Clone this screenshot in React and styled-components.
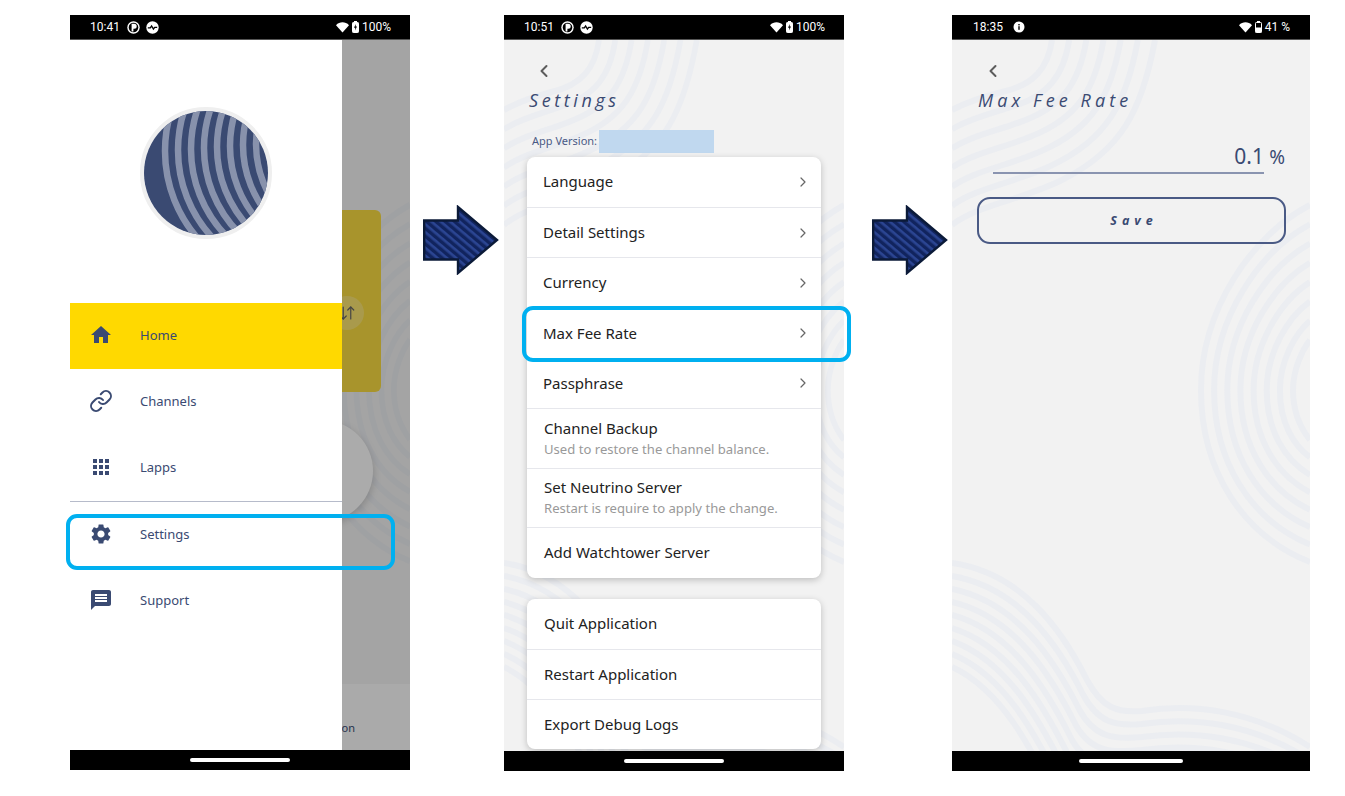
import React from "react";
import styled, { createGlobalStyle } from "styled-components";
import { ChevronLeft, ChevronRight, ArrowDownUp } from "lucide-react";
import { MdHome, MdApps, MdSettings, MdMessage } from "react-icons/md";
import { FiLink } from "react-icons/fi";

const navy = "#3a4a72";

const GlobalStyle = createGlobalStyle`
  html, body {
    margin: 0;
    background: #ffffff;
    font-family: "Noto Sans", "Liberation Sans", sans-serif;
  }
`;

const Page = styled.div`
  display: flex;
  align-items: flex-start;
  width: 1345px;
  height: 796px;
  box-sizing: border-box;
  padding: 15px 0 0 70px;
  overflow: hidden;
`;

const Phone = styled.div`
  position: relative;
  display: flex;
  flex-direction: column;
  flex: none;
  width: ${(p) => p.$width}px;
  height: ${(p) => p.$height}px;
`;

const StatusBar = styled.div`
  display: flex;
  align-items: center;
  flex: none;
  height: 25px;
  box-sizing: border-box;
  padding: 0 ${(p) => p.$right}px 0 ${(p) => p.$left}px;
  background: #000;
  border-bottom: 1px solid #555;
  color: #fff;
  font: 400 12px Roboto, sans-serif;
`;

const StatusTime = styled.span`
  margin-right: ${(p) => p.$gap}px;
`;

const StatusGroup = styled.div`
  display: flex;
  align-items: center;
  gap: ${(p) => p.$gap || 6}px;
`;

const StatusRight = styled(StatusGroup)`
  margin-left: auto;
  gap: 3px;
`;

const Screen = styled.div`
  position: relative;
  flex: 1;
  min-height: 0;
  overflow: hidden;
  background: #f2f2f2;
`;

const Content = styled.div`
  position: relative;
  display: flex;
  flex-direction: column;
  height: 100%;
`;

const NavBar = styled.div`
  display: flex;
  align-items: center;
  justify-content: center;
  flex: none;
  height: 20px;
  background: #000;
`;

const NavPill = styled.div`
  width: ${(p) => p.$width}px;
  height: 4px;
  border-radius: 2px;
  background: #fff;
`;

const WaveSvg = styled.svg`
  position: absolute;
  inset: 0;
  width: 100%;
  height: 100%;
`;

const Highlight = styled.div`
  position: absolute;
  left: ${(p) => p.$left}px;
  top: ${(p) => p.$top}px;
  width: 329px;
  height: 56px;
  box-sizing: border-box;
  border: 4px solid #00b0f0;
  border-radius: 11px;
`;

const ArrowSlot = styled.svg`
  flex: none;
  width: 76px;
  height: 70px;
  margin: 190px ${(p) => p.$right}px 0 ${(p) => p.$left}px;
`;

/* phone 1: what sits behind the drawer */
const BalanceCard = styled.div`
  display: flex;
  align-items: center;
  justify-content: flex-end;
  width: 282px;
  height: 182px;
  box-sizing: border-box;
  margin: 170px 0 0 29px;
  padding: 24px 17px 0 0;
  border-radius: 6px;
  background: #f8db41;
`;

const SwapButton = styled.div`
  display: flex;
  align-items: center;
  justify-content: center;
  width: 34px;
  height: 34px;
  border-radius: 50%;
  background: rgba(255, 255, 255, 0.25);
  color: #666;
`;

const RoundButton = styled.div`
  width: 102px;
  height: 102px;
  margin: 28px 0 0 201px;
  border-radius: 50%;
  background: #fdfdfd;
  box-shadow: 0 3px 8px rgba(0, 0, 0, 0.2);
`;

const BottomStrip = styled.div`
  display: flex;
  align-items: center;
  justify-content: flex-end;
  height: 66px;
  margin-top: auto;
  padding: 20px 55px 0 0;
  box-sizing: border-box;
  background: #fbfbfb;
  color: ${navy};
  font-size: 11px;
`;

const Scrim = styled.div`
  position: absolute;
  inset: 0;
  background: rgba(0, 0, 0, 0.32);
`;

const Drawer = styled.div`
  position: absolute;
  top: 0;
  bottom: 0;
  left: 0;
  display: flex;
  flex-direction: column;
  width: 272px;
  background: #fff;
`;

const LogoWrap = styled.div`
  align-self: center;
  width: 124px;
  height: 124px;
  margin: 67px 0 64px;
  border: 4px solid #efefef;
  border-radius: 50%;
  overflow: hidden;
`;

const MenuRow = styled.div`
  display: flex;
  align-items: ${(p) => (p.$top ? "flex-start" : "center")};
  gap: 27px;
  flex: none;
  height: 66px;
  box-sizing: border-box;
  padding: ${(p) => (p.$top ? "20px" : "0")} 0 ${(p) => (p.$top ? "0" : "2px")} 19px;
  background: ${(p) => (p.$active ? "#ffd900" : "transparent")};
  color: ${navy};
  font-size: 13px;
  line-height: 24px;

  svg {
    flex: none;
    width: 24px;
    height: 24px;
  }
`;

const MenuDivider = styled.div`
  flex: none;
  height: 1px;
  background: #b6bbca;
`;

/* phones 2 and 3 */
const BackRow = styled.div`
  display: flex;
  align-items: center;
  height: 20px;
  margin: 21px 0 0 ${(p) => p.$left}px;
  color: #5c5c5c;
`;

const Title = styled.h1`
  margin: 7px 0 0 ${(p) => p.$left}px;
  color: ${navy};
  font: italic 400 18px/24px "Open Sans", "Noto Sans", sans-serif;
  letter-spacing: ${(p) => p.$spacing}px;
`;

const VersionRow = styled.div`
  display: flex;
  align-items: center;
  height: 23px;
  margin: 18px 0 4px 28px;
  color: #4a5a85;
  font-size: 11px;
`;

const VersionLabel = styled.span`
  margin-bottom: 2px;
`;

const VersionMask = styled.div`
  width: 115px;
  height: 23px;
  margin-left: 2px;
  background: #c0d8ef;
`;

const Card = styled.div`
  flex: none;
  width: 294px;
  margin: 0 0 ${(p) => p.$bottom || 0}px 23px;
  border-radius: 8px;
  background: #fff;
  box-shadow: 0 2px 7px rgba(0, 0, 0, 0.22);
`;

const Row = styled.div`
  display: flex;
  align-items: center;
  justify-content: space-between;
  height: ${(p) => p.$height}px;
  box-sizing: border-box;
  padding: 0 10px 0 ${(p) => p.$left}px;
  color: #222;
  font-size: 15px;
  border-top: ${(p) => (p.$first ? "none" : "1.5px solid #e6e7ec")};

  svg {
    color: #666;
  }
`;

const RowText = styled.div`
  display: flex;
  flex-direction: column;
  gap: 1px;
  padding-bottom: ${(p) => p.$lift}px;
  line-height: 20px;
`;

const RowHint = styled.span`
  color: #999;
  font-size: 13.1px;
  line-height: 20px;
`;

const InputRow = styled.div`
  display: flex;
  align-items: flex-end;
  margin: 31px 25px 0 41px;
  color: ${navy};
`;

const InputValue = styled.div`
  flex: 1;
  height: 31px;
  box-sizing: border-box;
  border-bottom: 2px solid #8a94b0;
  text-align: right;
  font-size: 21px;
  line-height: 26px;
`;

const InputUnit = styled.span`
  width: 21px;
  height: 31px;
  text-align: right;
  font-size: 19px;
  line-height: 28px;
`;

const SaveButton = styled.button`
  width: 309px;
  height: 47px;
  margin: 23px 0 0 25px;
  padding: 0 0 0 5px;
  border: 2px solid #4a5a85;
  border-radius: 13px;
  background: transparent;
  color: ${navy};
  font: italic 700 12.5px "Open Sans", "Noto Sans", sans-serif;
  letter-spacing: 5px;
`;

const lerp = (a, b, t) => a + (b - a) * t;

// each group: outer and inner curve with the same number of points, the bands in between are interpolated
const waveGroups = [
  {
    count: 7,
    from: [100, 0, 96, 28, 82, 45, 50, 52, 30, 57, 15, 62, 0, 70],
    to: [203, 0, 190, 70, 170, 110, 110, 140, 70, 160, 25, 165, 0, 185],
  },
  {
    count: 8,
    from: [358, 165, 300, 195, 249, 270, 249, 350, 249, 430, 290, 495, 358, 522],
    to: [358, 300, 350, 310, 341, 330, 341, 350, 341, 375, 350, 390, 358, 400],
  },
  {
    count: 9,
    from: [0, 523, 70, 533, 110, 590, 135, 640, 150, 668, 165, 673, 190, 671, 240, 663, 300, 670, 358, 707],
    to: [0, 627, 50, 650, 80, 710, 105, 760, 120, 785, 150, 780, 190, 775, 240, 770, 300, 775, 358, 810],
  },
];

const wavePath = (pts) => {
  let d = `M${pts[0]} ${pts[1]} C`;
  for (let i = 2; i < pts.length; i += 2) d += ` ${pts[i].toFixed(1)} ${pts[i + 1].toFixed(1)}`;
  return d;
};

const Waves = () => (
  <WaveSvg viewBox="0 0 358 711" preserveAspectRatio="none">
    {waveGroups.flatMap((group, g) =>
      Array.from({ length: group.count }, (_, i) => {
        const t = i / (group.count - 1);
        const pts = group.from.map((v, k) => lerp(v, group.to[k], t));
        return <path key={`${g}-${i}`} d={wavePath(pts)} fill="none" stroke="#ebedf1" strokeWidth="6" />;
      })
    )}
  </WaveSvg>
);

const logoBands = [0, 1, 2, 3, 4, 5, 6, 7];

const Logo = () => (
  <svg width="124" height="124" viewBox="0 0 124 124" style={{ display: "block" }}>
    <rect width="124" height="124" fill={navy} />
    {logoBands.map((i) => (
      <circle
        key={i}
        cx={154 + i * 9}
        cy={40 - i}
        r={133 - i * 4}
        fill="none"
        stroke="#8892ac"
        strokeWidth="6.5"
      />
    ))}
  </svg>
);

const BlockArrow = ({ id, left, right }) => (
  <ArrowSlot viewBox="0 0 76 70" $left={left} $right={right}>
    <defs>
      <pattern id={id} width="6" height="6" patternUnits="userSpaceOnUse" patternTransform="rotate(40)">
        <rect width="6" height="6" fill="#11245e" />
        <rect width="6" height="2.6" fill="#2b4592" />
      </pattern>
    </defs>
    <polygon
      points="1.2,15.5 35,15.5 35,2 74,35 35,68 35,54.5 1.2,54.5"
      fill={`url(#${id})`}
      stroke="#0b1a38"
      strokeWidth="2.4"
    />
  </ArrowSlot>
);

const PieIcon = () => (
  <svg width="13" height="13" viewBox="0 0 13 13">
    <circle cx="6.5" cy="6.5" r="6.2" fill="#fff" />
    <circle cx="6.5" cy="6.5" r="4.8" fill="#000" />
    <path d="M4.6 2.8 H7.2 A2.5 2.5 0 0 1 7.2 7.8 H6.4 V10.4 H4.6 Z" fill="#fff" />
  </svg>
);

const PulseIcon = () => (
  <svg width="13" height="13" viewBox="0 0 13 13">
    <circle cx="6.5" cy="6.5" r="6.2" fill="#fff" />
    <path d="M1.8 6.8 L4.3 6.8 L5.6 5 L7.4 8 L8.7 6.3 L11.2 6.3" fill="none" stroke="#000" strokeWidth="1.3" />
  </svg>
);

const InfoIcon = () => (
  <svg width="12" height="12" viewBox="0 0 12 12">
    <circle cx="6" cy="6" r="5.5" fill="#fff" />
    <rect x="5.3" y="5.2" width="1.4" height="3.6" fill="#000" />
    <rect x="5.3" y="3" width="1.4" height="1.4" fill="#000" />
  </svg>
);

const WifiIcon = () => (
  <svg width="13" height="11" viewBox="0 0 13 11">
    <path d="M0 3.2 C3.6 -0.6 9.4 -0.6 13 3.2 L6.5 10.6 Z" fill="#fff" />
  </svg>
);

const BatteryIcon = ({ level }) => (
  <svg width="7" height="12" viewBox="0 0 7 12">
    <rect x="2" y="0" width="3" height="2" fill="#fff" />
    <rect x="0.5" y="1.5" width="6" height="10" rx="0.8" fill={level < 100 ? "none" : "#fff"} stroke="#fff" />
    {level < 100 ? (
      <rect x="0.5" y="6.5" width="6" height="5" fill="#fff" />
    ) : (
      <path d="M3.8 3 L2 6.8 H3.3 L3 9.6 L5 5.6 H3.7 Z" fill="#000" />
    )}
  </svg>
);

const Status = ({ time, timeGap, left, right, icons, level, percent }) => (
  <StatusBar $left={left} $right={right}>
    <StatusTime $gap={timeGap}>{time}</StatusTime>
    <StatusGroup>{icons}</StatusGroup>
    <StatusRight>
      <WifiIcon />
      <BatteryIcon level={level} />
      <span>{percent}</span>
    </StatusRight>
  </StatusBar>
);

const menuItems = [
  { icon: <MdHome />, label: "Home", active: true },
  { icon: <FiLink />, label: "Channels" },
  { icon: <MdApps />, label: "Lapps", divider: true },
  { icon: <MdSettings />, label: "Settings", top: true },
  { icon: <MdMessage />, label: "Support" },
];

const settingsRows = [
  { label: "Language", chevron: true, lift: 3 },
  { label: "Detail Settings", chevron: true, lift: 1 },
  { label: "Currency", chevron: true, lift: 1 },
  { label: "Max Fee Rate", chevron: true, lift: 1 },
  { label: "Passphrase", chevron: true, lift: 1 },
  { label: "Channel Backup", hint: "Used to restore the channel balance.", lift: 0 },
  { label: "Set Neutrino Server", hint: "Restart is require to apply the change.", lift: 0 },
  { label: "Add Watchtower Server", lift: 1 },
];

const appRows = ["Quit Application", "Restart Application", "Export Debug Logs"];

const App = () => {
  return (
    <>
      <GlobalStyle />
      <Page>
        <Phone $width={340} $height={755}>
          <Status
            time="10:41"
            timeGap={7}
            left={20}
            right={19}
            level={100}
            percent="100%"
            icons={
              <>
                <PieIcon />
                <PulseIcon />
              </>
            }
          />
          <Screen>
            <Waves />
            <Content>
              <BalanceCard>
                <SwapButton>
                  <ArrowDownUp size={18} strokeWidth={1.6} />
                </SwapButton>
              </BalanceCard>
              <RoundButton />
              <BottomStrip>on</BottomStrip>
            </Content>
            <Scrim />
            <Drawer>
              <LogoWrap>
                <Logo />
              </LogoWrap>
              {menuItems.map((item) => (
                <React.Fragment key={item.label}>
                  <MenuRow $active={item.active} $top={item.top}>
                    {item.icon}
                    {item.label}
                  </MenuRow>
                  {item.divider && <MenuDivider />}
                </React.Fragment>
              ))}
            </Drawer>
          </Screen>
          <NavBar>
            <NavPill $width={100} />
          </NavBar>
          <Highlight $left={-4} $top={499} />
        </Phone>

        <BlockArrow id="hatch-a" left={13} right={5} />

        <Phone $width={340} $height={756}>
          <Status
            time="10:51"
            timeGap={7}
            left={20}
            right={19}
            level={100}
            percent="100%"
            icons={
              <>
                <PieIcon />
                <PulseIcon />
              </>
            }
          />
          <Screen>
            <Waves />
            <Content>
              <BackRow $left={30}>
                <ChevronLeft size={20} strokeWidth={2.4} />
              </BackRow>
              <Title $left={25} $spacing={3.6}>
                Settings
              </Title>
              <VersionRow>
                <VersionLabel>App Version:</VersionLabel>
                <VersionMask />
              </VersionRow>
              <Card $bottom={21}>
                {settingsRows.map((row, i) => (
                  <Row
                    key={row.label}
                    $first={i === 0}
                    $height={row.hint ? 59.7 : 50.2}
                    $left={row.chevron ? 16 : 17}
                  >
                    <RowText $lift={row.lift}>
                      {row.label}
                      {row.hint && <RowHint>{row.hint}</RowHint>}
                    </RowText>
                    {row.chevron && <ChevronRight size={16} strokeWidth={1.8} />}
                  </Row>
                ))}
              </Card>
              <Card>
                {appRows.map((label, i) => (
                  <Row key={label} $first={i === 0} $height={50.3} $left={17}>
                    <RowText $lift={1}>{label}</RowText>
                  </Row>
                ))}
              </Card>
            </Content>
          </Screen>
          <NavBar>
            <NavPill $width={100} />
          </NavBar>
          <Highlight $left={18} $top={291} />
        </Phone>

        <BlockArrow id="hatch-b" left={28} right={4} />

        <Phone $width={358} $height={756}>
          <Status
            time="18:35"
            timeGap={10}
            left={21}
            right={20}
            level={41}
            percent="41 %"
            icons={<InfoIcon />}
          />
          <Screen>
            <Waves />
            <Content>
              <BackRow $left={31}>
                <ChevronLeft size={20} strokeWidth={2.4} />
              </BackRow>
              <Title $left={26} $spacing={4.1}>
                Max Fee Rate
              </Title>
              <InputRow>
                <InputValue>0.1</InputValue>
                <InputUnit>%</InputUnit>
              </InputRow>
              <SaveButton>Save</SaveButton>
            </Content>
          </Screen>
          <NavBar>
            <NavPill $width={104} />
          </NavBar>
        </Phone>
      </Page>
    </>
  );
};

export default App;
